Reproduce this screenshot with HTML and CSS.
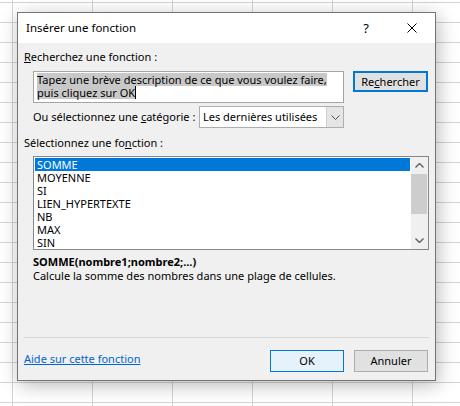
FILE: index.html
```html
<!DOCTYPE html>
<html lang="fr">
<head>
<meta charset="utf-8">
<title>Insérer une fonction</title>
<link rel="stylesheet" href="styles.css">
</head>
<body>
<div class="dialog">
  <div class="titlebar">
    <span class="title">Insérer une fonction</span>
    <span class="help">?</span>
    <svg class="close" width="10" height="10" viewBox="0 0 10 10"><path d="M0.5 0.5 L9.5 9.5 M9.5 0.5 L0.5 9.5" stroke="#000" stroke-width="1" fill="none"/></svg>
  </div>
  <div class="content">
    <div class="label"><u>R</u>echerchez une fonction :</div>
    <div class="search-row">
      <div class="input">
        <div class="line"><span class="sel">Tapez une brève description de ce que vous voulez faire,</span></div>
        <div class="line"><span class="sel">puis cliquez sur OK</span><span class="caret"></span></div>
      </div>
      <div class="btn btn-search">Re<u>c</u>hercher</div>
    </div>
    <div class="cat-row">
      <span>Ou sélectionnez une <u>c</u>atégorie :</span>
      <div class="select">
        <span class="select-val">Les dernières utilisées</span>
        <span class="select-btn"><svg width="9" height="5" viewBox="0 0 9 5"><polyline points="0.5,0.5 4.5,4.5 8.5,0.5" stroke="#505050" fill="none" stroke-width="1"/></svg></span>
      </div>
    </div>
    <div class="label label2">Sélectionnez une fo<u>n</u>ction :</div>
    <div class="list">
      <div class="items">
        <div class="item selected">SOMME</div>
        <div class="item">MOYENNE</div>
        <div class="item">SI</div>
        <div class="item">LIEN_HYPERTEXTE</div>
        <div class="item">NB</div>
        <div class="item">MAX</div>
        <div class="item">SIN</div>
      </div>
      <div class="scrollbar">
        <div class="arrow"><svg width="9" height="5" viewBox="0 0 9 5"><polyline points="0.5,4.5 4.5,0.5 8.5,4.5" stroke="#606060" fill="none" stroke-width="1.4"/></svg></div>
        <div class="track"><div class="thumb"></div></div>
        <div class="arrow"><svg width="9" height="5" viewBox="0 0 9 5"><polyline points="0.5,0.5 4.5,4.5 8.5,0.5" stroke="#606060" fill="none" stroke-width="1.4"/></svg></div>
      </div>
    </div>
    <div class="syntax">SOMME(nombre1;nombre2;...)</div>
    <div class="desc">Calcule la somme des nombres dans une plage de cellules.</div>
    <div class="footer">
      <div class="separator"></div>
      <div class="footer-row">
        <span class="link">Aide sur cette fonction</span>
        <div class="buttons">
          <div class="btn btn-ok">OK</div>
          <div class="btn btn-cancel">Annuler</div>
        </div>
      </div>
    </div>
  </div>
</div>
</body>
</html>
```
FILE: styles.css
```css
html, body {
  margin: 0;
  padding: 0;
}
body {
  width: 460px;
  height: 406px;
  overflow: hidden;
  background-color: #ffffff;
  background-image:
    linear-gradient(to right, #d4d4d4 1px, transparent 1px),
    linear-gradient(to bottom, #d4d4d4 1px, transparent 1px);
  background-size: 80px 20px;
  background-position: 12px 2px;
  font-family: "Noto Sans", "Liberation Sans", Arial, sans-serif;
  font-size: 11px;
  line-height: 14px;
  color: #000;
}
.dialog {
  margin: 12px 0 0 17px;
  width: 417px;
  height: 367px;
  border: 1px solid #747474;
  background: #f0f0f0;
  box-shadow: 2px 4px 18px rgba(0, 0, 0, 0.28);
  display: flex;
  flex-direction: column;
}
.titlebar {
  height: 30px;
  background: #ffffff;
  display: flex;
  align-items: center;
  padding-left: 8px;
  flex-shrink: 0;
}
.title {
  flex: 1;
  font-size: 11.5px;
}
.help {
  font-size: 13px;
  margin-right: 38px;
}
.close {
  margin-right: 18px;
}
.content {
  flex: 1;
  display: flex;
  flex-direction: column;
}
.label {
  margin: 7px 0 0 6px;
  line-height: 14px;
}
.search-row {
  margin: 7px 0 0 15px;
  display: flex;
  align-items: flex-start;
  gap: 9px;
}
.input {
  width: 309px;
  height: 29px;
  border: 1px solid #a5a5a5;
  background: #fff;
  padding-top: 1px;
  box-sizing: content-box;
}
.input .line {
  height: 13px;
  line-height: 13px;
  padding-left: 3px;
  display: flex;
  align-items: center;
}
.sel {
  background: #c8c8c8;
  height: 13px;
  line-height: 13px;
}
.caret {
  display: inline-block;
  width: 1px;
  height: 13px;
  background: #000;
}
.btn {
  box-sizing: border-box;
  display: flex;
  align-items: center;
  justify-content: center;
  background: #e1e1e1;
  border: 1px solid #adadad;
}
.btn-search {
  width: 75px;
  height: 21px;
  border: 2px solid #0078d7;
}
.cat-row {
  margin: 3px 0 0 15px;
  width: 311px;
  height: 22px;
  display: flex;
  align-items: center;
  justify-content: space-between;
}
.select {
  box-sizing: border-box;
  width: 145px;
  height: 22px;
  border: 1px solid #adadad;
  background: #fff;
  display: flex;
  align-items: stretch;
}
.select-val {
  flex: 1;
  padding-left: 3px;
  display: flex;
  align-items: center;
}
.select-btn {
  width: 16px;
  background: #e5e5e5;
  border-left: 1px solid #d0d0d0;
  display: flex;
  align-items: center;
  justify-content: center;
}
.label2 {
  margin-top: 8px;
}
.list {
  margin: 6px 0 0 15px;
  width: 394px;
  height: 92px;
  border: 1px solid #828790;
  background: #fff;
  display: flex;
}
.items {
  flex: 1;
  padding: 1px;
}
.item {
  height: 13px;
  line-height: 13px;
  padding-left: 2px;
}
.item.selected {
  background: #0078d7;
  color: #fff;
}
.scrollbar {
  width: 17px;
  background: #f0f0f0;
  display: flex;
  flex-direction: column;
}
.arrow {
  height: 17px;
  display: flex;
  align-items: center;
  justify-content: center;
}
.track {
  flex: 1;
  padding: 0 1px 0 0;
}
.thumb {
  height: 40px;
  background: #cdcdcd;
}
.syntax {
  margin: 5px 0 0 15px;
  line-height: 13px;
  font-weight: bold;
}
.desc {
  margin: 1px 0 0 15px;
  line-height: 13px;
}
.footer {
  margin-top: auto;
  padding: 0 6px 8px 6px;
}
.separator {
  height: 1px;
  background: #d9d9d9;
  width: 405px;
}
.footer-row {
  margin-top: 12px;
  display: flex;
  align-items: flex-start;
  justify-content: space-between;
}
.link {
  margin-top: 2px;
  line-height: 14px;
  color: #0066cc;
  text-decoration: underline;
}
.buttons {
  display: flex;
  gap: 10px;
  margin-right: 1px;
}
.btn-ok, .btn-cancel {
  width: 74px;
  height: 22px;
}
.btn-ok {
  background: #e5f1fb;
  border-color: #0078d7;
}
```
